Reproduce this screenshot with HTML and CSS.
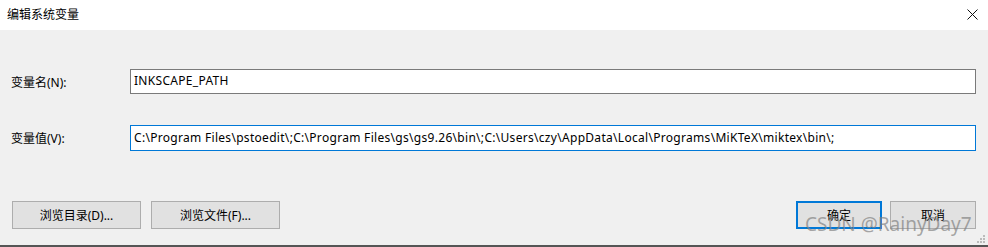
FILE: index.html
```html
<!DOCTYPE html>
<html lang="zh-CN">
<head>
  <meta charset="UTF-8" />
  <title>编辑系统变量</title>
  <link rel="stylesheet" href="styles.css">
</head>
<body>
  <div class="dialog">
    <div class="titlebar">
      <span class="title">编辑系统变量</span>
      <svg class="close" width="11" height="11" viewBox="0 0 11 11">
        <path d="M0.5 0.5 L10.5 10.5 M10.5 0.5 L0.5 10.5" stroke="#111" stroke-width="1" fill="none"/>
      </svg>
    </div>

    <div class="content">
      <div class="row row-name">
        <label class="label">变量名(N):</label>
        <div class="field">INKSCAPE_PATH</div>
      </div>
      <div class="row row-value">
        <label class="label">变量值(V):</label>
        <div class="field focused">C:\Program Files\pstoedit\;C:\Program Files\gs\gs9.26\bin\;C:\Users\czy\AppData\Local\Programs\MiKTeX\miktex\bin\;</div>
      </div>

      <div class="buttons">
        <div class="left">
          <button class="btn">浏览目录(D)...</button>
          <button class="btn">浏览文件(F)...</button>
        </div>
        <div class="right">
          <button class="btn small default">确定</button>
          <button class="btn small">取消</button>
        </div>
      </div>
    </div>

    <div class="bottom-line"></div>
    <span class="watermark">CSDN @RainyDay7</span>
    <svg class="grip" width="10" height="10" viewBox="0 0 10 10">
      <rect x="7" y="1" width="2" height="2" fill="#bbb"/>
      <rect x="4" y="4" width="2" height="2" fill="#bbb"/>
      <rect x="7" y="4" width="2" height="2" fill="#bbb"/>
      <rect x="1" y="7" width="2" height="2" fill="#bbb"/>
      <rect x="4" y="7" width="2" height="2" fill="#bbb"/>
      <rect x="7" y="7" width="2" height="2" fill="#bbb"/>
    </svg>
  </div>
</body>
</html>
```

FILE: styles.css
```css
body {
  margin: 0;
  font-family: "Noto Sans", "Noto Sans CJK SC", sans-serif;
  font-size: 12px;
  color: #000;
  background-color: #f0f0f0;
}

.dialog {
  position: relative;
  width: 988px;
  height: 247px;
  background-color: #f0f0f0;
  overflow: hidden;
}

.titlebar {
  height: 30px;
  background-color: #fff;
  display: flex;
  align-items: center;
  justify-content: space-between;
  padding: 0 10px 0 7px;
}

.title {
  font-size: 12px;
  margin-top: -2px;
}

.close {
  margin-top: -1px;
}

.content {
  padding: 0 12px 0 11px;
}

.row {
  display: flex;
  align-items: center;
}

.row-name {
  margin-top: 39px;
}

.row-value {
  margin-top: 31px;
}

.label {
  width: 119px;
}

.field {
  flex: 1;
  height: 23px;
  line-height: 22px;
  background-color: #fff;
  border: 1px solid #7a7a7a;
  padding: 0 3px;
  letter-spacing: 0.3px;
  white-space: nowrap;
  overflow: hidden;
}

.field.focused {
  border-color: #0078d7;
  height: 24px;
  line-height: 24px;
}

.buttons {
  display: flex;
  justify-content: space-between;
  margin-top: 50px;
  padding-left: 1px;
}

.left, .right {
  display: flex;
}

.left {
  gap: 10px;
}

.right {
  gap: 8px;
}

.btn {
  width: 129px;
  height: 28px;
  font-family: inherit;
  font-size: 12px;
  color: #000;
  background-color: #e1e1e1;
  border: 1px solid #adadad;
  padding: 0;
}

.btn.small {
  width: 86px;
}

.btn.default {
  border: 2px solid #0078d7;
}

.bottom-line {
  position: absolute;
  left: 0;
  right: 0;
  bottom: 0;
  height: 2px;
  background-color: #555;
}

.watermark {
  position: absolute;
  left: 805px;
  top: 211px;
  font-size: 19px;
  color: rgba(130, 130, 130, 0.7);
}

.grip {
  position: absolute;
  right: 2px;
  bottom: 3px;
}
```
